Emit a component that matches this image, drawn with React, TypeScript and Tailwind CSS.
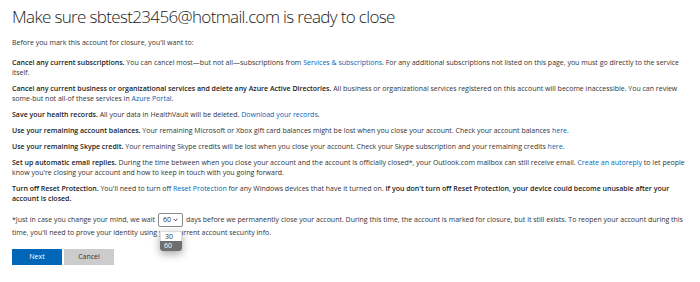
import React from "react";

const L = ({ children }: { children: React.ReactNode }) => (
  <span className="text-[#0067b8]">{children}</span>
);
const B = ({ children }: { children: React.ReactNode }) => (
  <span className="font-semibold text-[#1a1a1a]">{children}</span>
);

export default function App() {
  return (
    <div
      className="w-[700px] h-[282px] bg-white text-[#333] overflow-hidden pl-[12px] pt-[2px]"
      style={{ fontFamily: '"Open Sans", "Noto Sans", sans-serif' }}
    >
      <h1 className="text-[17px] leading-[29px] font-light tracking-[-0.65px] text-[#222] whitespace-nowrap">
        Make sure sbtest23456@hotmail.com is ready to close
      </h1>
      <div className="text-[7px] leading-[10px] whitespace-nowrap">
        <p className="mt-[7px] mb-[10px]">Before you mark this account for closure, you'll want to:</p>
        <p className="mb-[6px]">
          <B>Cancel any current subscriptions.</B> You can cancel most—but not all—subscriptions from{" "}
          <L>Services &amp; subscriptions</L>. For any additional subscriptions not listed on this page, you must go directly to the service
          <br />
          itself.
        </p>
        <p className="mb-[6px]">
          <B>Cancel any current business or organizational services and delete any Azure Active Directories.</B> All business or organizational services registered on this account will become inaccessible. You can review
          <br />
          some-but not all-of these services in <L>Azure Portal</L>.
        </p>
        <p className="mb-[6px]">
          <B>Save your health records.</B> All your data in HealthVault will be deleted. <L>Download your records</L>.
        </p>
        <p className="mb-[6px]">
          <B>Use your remaining account balances.</B> Your remaining Microsoft or Xbox gift card balances might be lost when you close your account. Check your account balances <L>here</L>.
        </p>
        <p className="mb-[6px]">
          <B>Use your remaining Skype credit.</B> Your remaining Skype credits will be lost when you close your account. Check your Skype subscription and your remaining credits <L>here</L>.
        </p>
        <p className="mb-[6px]">
          <B>Set up automatic email replies.</B> During the time between when you close your account and the account is officially closed*, your Outlook.com mailbox can still receive email. <L>Create an autoreply</L> to let people
          <br />
          know you're closing your account and how to keep in touch with you going forward.
        </p>
        <p className="mb-[9px]">
          <B>Turn off Reset Protection.</B> You'll need to turn off <L>Reset Protection</L> for any Windows devices that have it turned on.{" "}
          <B>If you don't turn off Reset Protection, your device could become unusable after your</B>
          <br />
          <B>account is closed.</B>
        </p>
        <div className="leading-[12px]">
          <div className="flex items-center">
            <span>*Just in case you change your mind, we wait</span>
            <span className="relative mx-[3px]">
              <span className="flex items-center justify-center gap-[2px] w-[25px] h-[14px] border border-[#8a8a8a] rounded-[2px] bg-white text-[#333]">
                60
                <svg width="5" height="4" viewBox="0 0 5 4">
                  <path d="M0.6 0.8 L2.5 2.8 L4.4 0.8" fill="none" stroke="#333" strokeWidth="0.9" />
                </svg>
              </span>
              <span className="absolute left-[2px] top-[18px] w-[22px] rounded-b-[3px] bg-white shadow-[0_3px_8px_rgba(0,0,0,0.35)] z-10 flex flex-col">
                <span className="h-[10px] leading-[10px] pl-[4px] text-[#333] border border-[#ddd] border-b-0 bg-white">30</span>
                <span className="h-[10px] leading-[10px] pl-[4px] text-white bg-[#6e6e6e] rounded-b-[3px]">60</span>
              </span>
            </span>
            <span>days before we permanently close your account. During this time, the account is marked for closure, but it still exists. To reopen your account during this</span>
          </div>
          <div>time, you'll need to prove your identity using your current account security info.</div>
        </div>
        <div className="flex gap-[2px] mt-[10px]">
          <button className="w-[50px] h-[16px] bg-[#0067b8] text-white text-[7px] leading-[16px]">Next</button>
          <button className="w-[50px] h-[16px] bg-[#cccccc] text-[#333] text-[7px] leading-[16px]">Cancel</button>
        </div>
      </div>
    </div>
  );
}
